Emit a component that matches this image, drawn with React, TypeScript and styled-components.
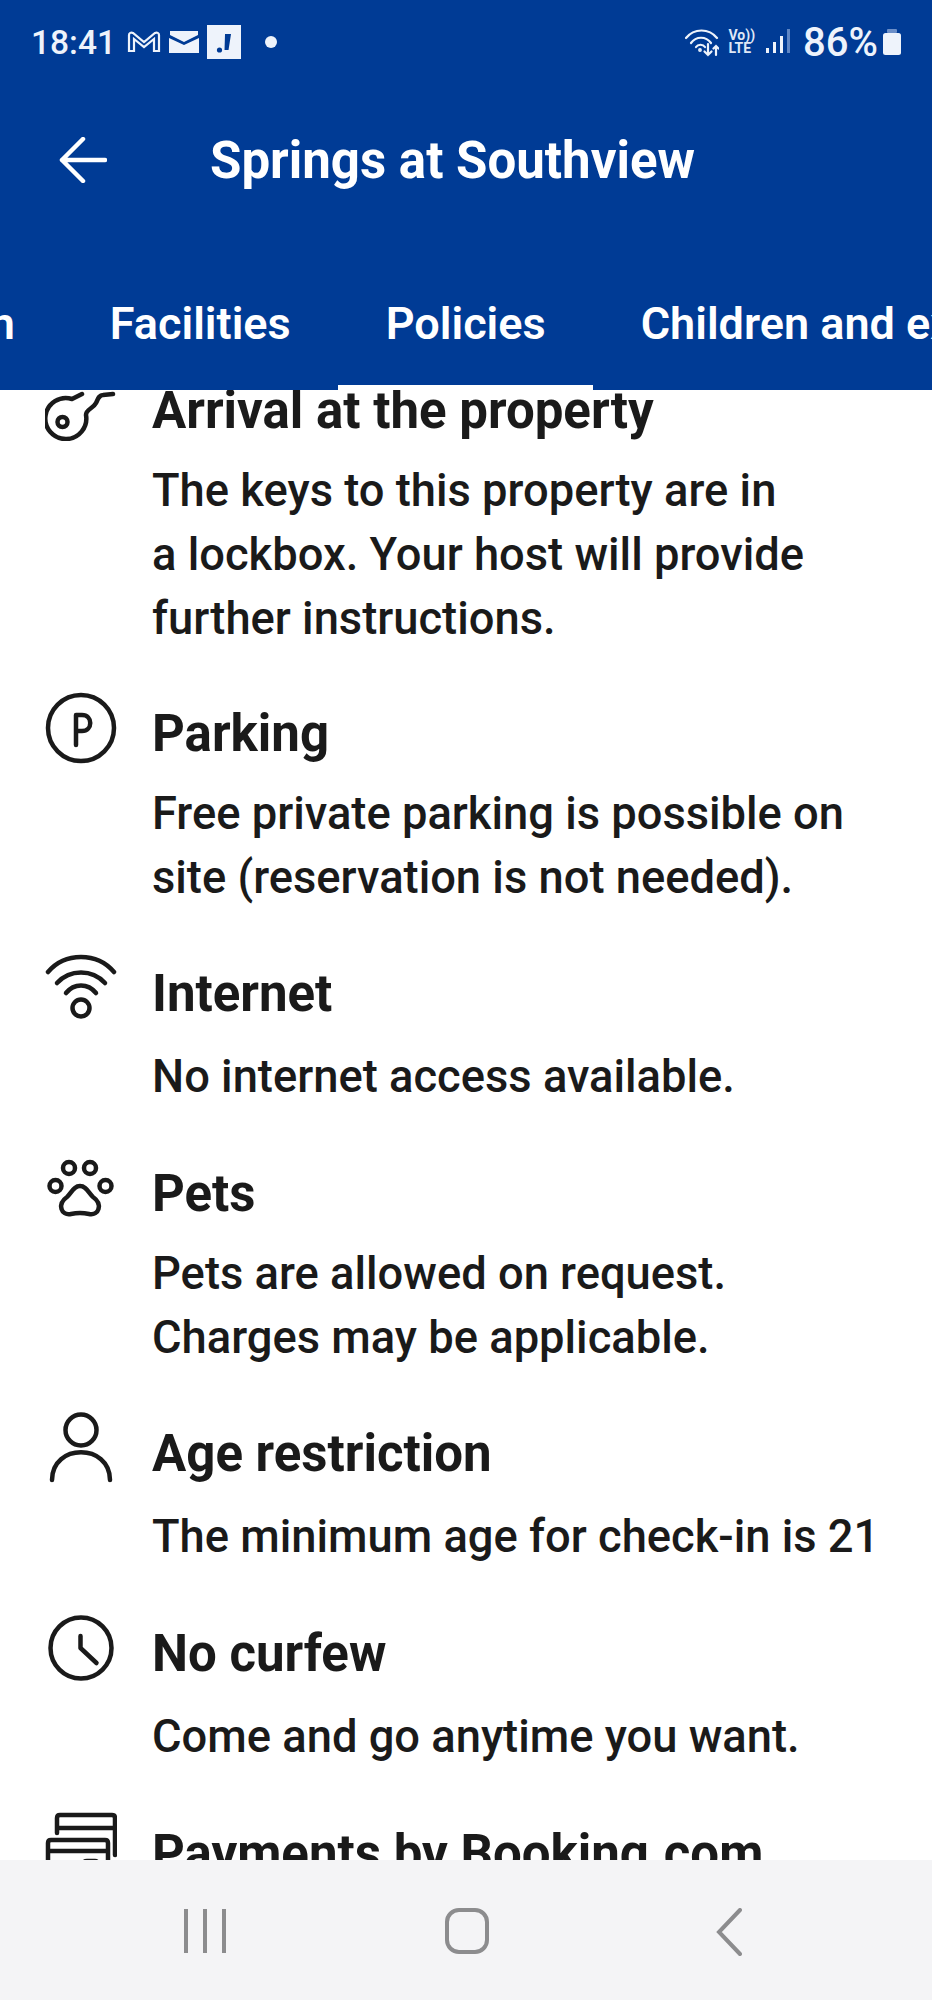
import styled, { createGlobalStyle } from "styled-components";
import type { ReactNode } from "react";

const GlobalStyle = createGlobalStyle`
  html, body {
    margin: 0;
    padding: 0;
    background: #ffffff;
    font-family: Roboto, "Liberation Sans", sans-serif;
  }
  * { box-sizing: border-box; }
`;

const IconKey = () => (
  <IconSvg viewBox="0 0 72 72">
    <circle cx="17.5" cy="53" r="5" />
    <path d="M37 25 L27 30 A20.500 20.500 0 1 0 41 46 C41 40 48 40 51 34 C53 30 54 26 58 26 L68 25" />
  </IconSvg>
);

const IconParking = () => (
  <IconSvg viewBox="0 0 72 72">
    <circle cx="36" cy="36" r="33" />
    <path d="M31 53 V23 H37 C48 23 48 39 37 39 H31" />
  </IconSvg>
);

const IconWifi = () => (
  <IconSvg viewBox="0 0 72 72">
    <path d="M3 20 C20 0 52 0 69 20" />
    <path d="M12 31 C25 17 47 17 60 31" />
    <path d="M21 41 C29 31 43 31 51 41" />
    <circle cx="36" cy="56" r="8.500" />
  </IconSvg>
);

const IconPaw = () => (
  <IconSvg viewBox="0 0 72 72">
    <circle cx="24" cy="16" r="6" />
    <circle cx="45" cy="16" r="6" />
    <circle cx="10.500" cy="34" r="6" />
    <circle cx="60.500" cy="34" r="6" />
    <path d="M35 34 C29 34 27 40 22 45 C12 52 16 64 26 62 C31 61 39 61 44 62 C54 64 58 52 48 45 C43 40 41 34 35 34 Z" />
  </IconSvg>
);

const IconPerson = () => (
  <IconSvg viewBox="0 0 72 72">
    <circle cx="36" cy="18" r="15.500" />
    <path d="M7 68 C7 31 65 31 65 68" />
  </IconSvg>
);

const IconClock = () => (
  <IconSvg viewBox="0 0 72 72">
    <circle cx="36" cy="36" r="30.500" />
    <path d="M35.500 24 V36 L51.500 51" />
  </IconSvg>
);

const IconCards = () => (
  <IconSvg viewBox="0 0 72 72">
    <path d="M12 21 V6 C12 4 13 3 15 3 H67 C69 3 70 4 70 6 V43 M12 16 H70" />
    <path d="M3 72 V31 C3 29 4 28 6 28 H60 C62 28 63 29 63 31 V72 M3 39 H63" />
    <path d="M38 54 C38 50 40 49 42 49 H50 C52 49 53 50 53 54" />
  </IconSvg>
);

type PolicyItem = { icon: ReactNode; title: string; lines: string[] };

const policies: PolicyItem[] = [
  {
    icon: <IconKey />,
    title: "Arrival at the property",
    lines: ["The keys to this property are in", "a lockbox. Your host will provide", "further instructions."],
  },
  {
    icon: <IconParking />,
    title: "Parking",
    lines: ["Free private parking is possible on", "site (reservation is not needed)."],
  },
  { icon: <IconWifi />, title: "Internet", lines: ["No internet access available."] },
  {
    icon: <IconPaw />,
    title: "Pets",
    lines: ["Pets are allowed on request.", "Charges may be applicable."],
  },
  {
    icon: <IconPerson />,
    title: "Age restriction",
    lines: ["The minimum age for check-in is 21"],
  },
  { icon: <IconClock />, title: "No curfew", lines: ["Come and go anytime you want."] },
  { icon: <IconCards />, title: "Payments by Booking.com", lines: [] },
];

const tabs = ["Location", "Facilities", "Policies", "Children and extra beds"];

export default function App() {
  return (
    <Page>
      <GlobalStyle />
      <Header>
        <StatusBar>
          <StatusGroup $gap={8}>
            <Clock>18:41</Clock>
            <svg width="34" height="24" viewBox="0 0 34 24" fill="none" stroke="#eef3fb" strokeWidth="2.2">
              <path d="M2 21 V5 C2 3 4 2 6 3 L17 12 L28 3 C30 2 32 3 32 5 V21 H27 V9 L17 17 L7 9 V21 Z" />
            </svg>
            <svg width="30" height="22" viewBox="0 0 30 22">
              <path d="M1 0 H29 V4 L15 11 L1 4 Z" fill="#eef3fb" />
              <path d="M0 7 L15 14 L30 7 V22 H0 Z" fill="#eef3fb" />
            </svg>
            <NoteBadge>
              <svg width="34" height="34" viewBox="0 0 34 34">
                <path d="M18 9 H24 L21.500 25 H17.500 Z" fill="#003b95" />
                <circle cx="12.500" cy="25" r="2.600" fill="#003b95" />
              </svg>
            </NoteBadge>
            <Dot />
          </StatusGroup>
          <StatusGroup $gap={10}>
            <svg width="34" height="30" viewBox="0 0 34 30" fill="none" stroke="#eef3fb" strokeWidth="2.2" strokeLinecap="round">
              <path d="M1 11 C9 1 24 1 32 11" />
              <path d="M6 16 C11 9 21 9 26 16" />
              <path d="M11 20 C13 17 18 17 20 20" />
              <circle cx="15" cy="23" r="0.800" />
              <path d="M23 17 V28 M19.500 24.500 L23 28 L26.500 24.500" />
              <path d="M31 28 V19 M28.500 21.500 L31 19 L33.500 21.500" />
            </svg>
            <VoLte>
              <span>Vo))</span>
              <span>LTE</span>
            </VoLte>
            <svg width="26" height="28" viewBox="0 0 26 28">
              <rect x="1" y="20" width="3" height="5" fill="#eef3fb" />
              <rect x="8" y="14" width="3" height="11" fill="#eef3fb" />
              <rect x="15" y="8" width="3" height="17" fill="#eef3fb" />
              <rect x="22" y="1" width="3" height="24" fill="#5f86c4" />
            </svg>
            <Battery>86%</Battery>
            <svg width="20" height="28" viewBox="0 0 20 28">
              <rect x="5" y="1" width="10" height="4" rx="1" fill="#6c8fc8" />
              <rect x="1" y="5" width="18" height="22" rx="2.500" fill="#eef3fb" />
            </svg>
          </StatusGroup>
        </StatusBar>
        <Toolbar>
          <BackButton>
            <svg width="48" height="46" viewBox="0 0 48 46" fill="none" stroke="#ffffff" strokeWidth="4.500" strokeLinecap="round" strokeLinejoin="round">
              <path d="M46 23 H3 M24 2 L3 23 L24 44" />
            </svg>
          </BackButton>
          <Title>Springs at Southview</Title>
        </Toolbar>
        <TabStrip>
          {tabs.map((tab) => (
            <Tab key={tab} $active={tab === "Policies"}>
              {tab}
            </Tab>
          ))}
        </TabStrip>
      </Header>
      <Content>
        <PolicyList>
          {policies.map((policy) => (
            <PolicyRow key={policy.title}>
              <IconCell>{policy.icon}</IconCell>
              <div>
                <PolicyTitle>{policy.title}</PolicyTitle>
                {policy.lines.length > 0 && (
                  <PolicyText $single={policy.lines.length === 1}>
                    {policy.lines.map((line) => (
                      <div key={line}>{line}</div>
                    ))}
                  </PolicyText>
                )}
              </div>
            </PolicyRow>
          ))}
        </PolicyList>
      </Content>
      <NavBar>
        <NavSlot>
          <svg width="42" height="46" viewBox="0 0 42 46" stroke="#8c8c8e" strokeWidth="4">
            <path d="M2 1 V45 M21 1 V45 M40 1 V45" />
          </svg>
        </NavSlot>
        <NavSlot>
          <svg width="46" height="46" viewBox="0 0 46 46" fill="none" stroke="#8c8c8e" strokeWidth="4">
            <rect x="3" y="2" width="40" height="42" rx="12" />
          </svg>
        </NavSlot>
        <NavSlot>
          <svg width="26" height="48" viewBox="0 0 26 48" fill="none" stroke="#8c8c8e" strokeWidth="4" strokeLinecap="round">
            <path d="M24 2 L3 24 L24 46" />
          </svg>
        </NavSlot>
      </NavBar>
    </Page>
  );
}

const Page = styled.div`
  width: 932px;
  height: 2000px;
  display: flex;
  flex-direction: column;
  overflow: hidden;
  background: #ffffff;
`;

const Header = styled.header`
  position: relative;
  z-index: 1;
  flex: none;
  height: 390px;
  background: #003b95;
  color: #ffffff;
`;

const StatusBar = styled.div`
  height: 84px;
  padding: 0 30px 0 31px;
  display: flex;
  align-items: center;
  justify-content: space-between;
`;

const StatusGroup = styled.div<{ $gap: number }>`
  display: flex;
  align-items: center;
  gap: ${(p) => p.$gap}px;
`;

const Clock = styled.span`
  margin-right: 3px;
  font-size: 33.500px;
  font-weight: 500;
  color: #eef3fb;
`;

const NoteBadge = styled.span`
  width: 34px;
  height: 34px;
  background: #eef3fb;
  display: block;
`;

const Dot = styled.span`
  width: 12px;
  height: 12px;
  margin-left: 16px;
  border-radius: 50%;
  background: #eef3fb;
`;

const VoLte = styled.span`
  display: flex;
  flex-direction: column;
  font-size: 14px;
  line-height: 13px;
  font-weight: 700;
  color: #dfe8f6;
`;

const Battery = styled.span`
  margin: 0 -6px 0 2px;
  font-size: 40px;
  font-weight: 500;
  color: #eef3fb;
`;

const Toolbar = styled.div`
  height: 152px;
  padding-left: 59px;
  display: flex;
  align-items: center;
  gap: 103px;
`;

const BackButton = styled.span`
  display: flex;
`;

const Title = styled.h1`
  margin: 0;
  font-size: 51px;
  font-weight: 700;
  white-space: nowrap;
`;

const TabStrip = styled.div`
  margin-top: 20px;
  margin-left: -207.5px;
  display: flex;
  white-space: nowrap;
`;

const Tab = styled.div<{ $active?: boolean }>`
  flex: none;
  height: 134px;
  padding: 5px 47.5px 0;
  display: flex;
  align-items: center;
  font-size: 45px;
  font-weight: 600;
  border-bottom: 5px solid ${(p) => (p.$active ? "#ffffff" : "transparent")};
`;

const Content = styled.main`
  flex: 1;
  min-height: 0;
  overflow: hidden;
`;

const PolicyList = styled.div`
  margin-top: -11px;
  display: flex;
  flex-direction: column;
  gap: 52px;
`;

const PolicyRow = styled.section`
  display: grid;
  grid-template-columns: 152px 1fr;
  color: #1a1a1a;
`;

const IconCell = styled.div`
  margin-top: -10px;
  padding-left: 45px;
`;

const IconSvg = styled.svg`
  display: block;
  width: 72px;
  height: 72px;
  fill: none;
  stroke: #1a1a1a;
  stroke-width: 4.500;
  stroke-linecap: round;
  stroke-linejoin: round;
`;

const PolicyTitle = styled.h2`
  margin: 0;
  font-size: 51px;
  line-height: 64px;
  font-weight: 700;
`;

const PolicyText = styled.div<{ $single?: boolean }>`
  margin-top: ${(p) => (p.$single ? "19px" : "16px")};
  padding-bottom: ${(p) => (p.$single ? "1.5px" : "0")};
  font-size: 45.300px;
  line-height: 63.750px;
  font-weight: 500;
`;

const NavBar = styled.nav`
  flex: none;
  height: 140px;
  background: #f4f4f6;
  display: grid;
  grid-template-columns: repeat(3, 1fr);
  padding: 48px 72px 0 74px;
`;

const NavSlot = styled.div`
  display: flex;
  justify-content: center;
  align-items: flex-start;
`;
